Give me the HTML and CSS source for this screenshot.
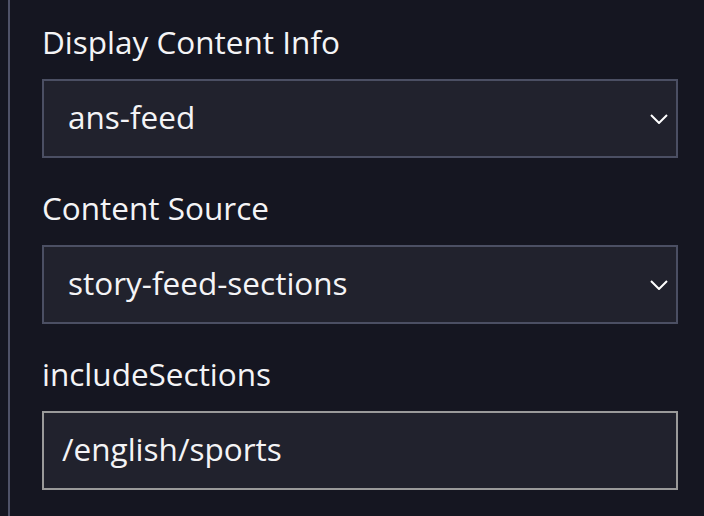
FILE: index.html
```html
<!DOCTYPE html>
<html lang="en">
<head>
<meta charset="utf-8">
<title>Settings</title>
<link rel="stylesheet" href="styles.css">
</head>
<body>
<div class="panel">
  <div class="field">
    <div class="label">Display Content Info</div>
    <div class="select">
      <span class="value">ans-feed</span>
      <svg class="chevron" width="18" height="10" viewBox="0 0 18 10"><path d="M1 1 L9 9 L17 1" fill="none" stroke="#ffffff" stroke-width="2"/></svg>
    </div>
  </div>
  <div class="field">
    <div class="label">Content Source</div>
    <div class="select">
      <span class="value">story-feed-sections</span>
      <svg class="chevron" width="18" height="10" viewBox="0 0 18 10"><path d="M1 1 L9 9 L17 1" fill="none" stroke="#ffffff" stroke-width="2"/></svg>
    </div>
  </div>
  <div class="field">
    <div class="label">includeSections</div>
    <div class="input">
      <span class="value">/english/sports</span>
    </div>
  </div>
</div>
</body>
</html>
```

FILE: styles.css
```css
html, body {
  margin: 0;
  padding: 0;
  background: #151621;
  width: 704px;
  height: 516px;
  overflow: hidden;
}
body {
  font-family: "Open Sans", "Noto Sans", sans-serif;
  color: #f4f4f6;
}
.panel {
  margin-left: 8px;
  border-left: 2px solid #4f5268;
  height: 516px;
  padding: 24px 26px 0 32px;
  box-sizing: border-box;
  display: flex;
  flex-direction: column;
  gap: 32px;
}
.field {
  display: flex;
  flex-direction: column;
  gap: 19px;
}
.label {
  font-size: 31.5px;
  line-height: 36px;
  height: 36px;
}
.select, .input {
  height: 79px;
  box-sizing: border-box;
  background: #21222d;
  border: 2px solid #4b4f63;
  display: flex;
  align-items: center;
  padding: 0 8px 5px 24px;
  font-size: 31.5px;
}
.select .chevron {
  margin-top: 5px;
}
.input {
  border-color: #9a9a9a;
  padding-left: 18px;
}
.value {
  flex: 1;
}
.chevron {
  display: block;
}
```
